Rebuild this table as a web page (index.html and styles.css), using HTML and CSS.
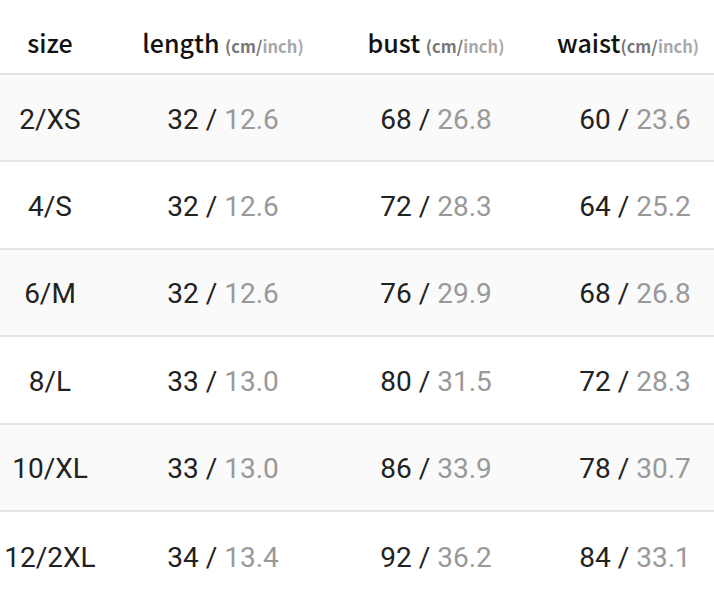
FILE: index.html
```html
<!DOCTYPE html>
<html>
<head>
<meta charset="utf-8">
<link rel="stylesheet" href="styles.css">
</head>
<body>
<div class="table">
  <div class="row head">
    <div class="cell">size</div>
    <div class="cell">length <span class="unit"><span class="cm">(cm/</span><span class="in">inch)</span></span></div>
    <div class="cell">bust <span class="unit"><span class="cm">(cm/</span><span class="in">inch)</span></span></div>
    <div class="cell c4h">waist<span class="unit"><span class="cm">(cm/</span><span class="in">inch)</span></span></div>
  </div>
  <div class="row alt">
    <div class="cell sz">2/XS</div>
    <div class="cell v">32 / <span class="g">12.6</span></div>
    <div class="cell v">68 / <span class="g">26.8</span></div>
    <div class="cell v c4">60 / <span class="g">23.6</span></div>
  </div>
  <div class="row">
    <div class="cell sz">4/S</div>
    <div class="cell v">32 / <span class="g">12.6</span></div>
    <div class="cell v">72 / <span class="g">28.3</span></div>
    <div class="cell v c4">64 / <span class="g">25.2</span></div>
  </div>
  <div class="row alt">
    <div class="cell sz">6/M</div>
    <div class="cell v">32 / <span class="g">12.6</span></div>
    <div class="cell v">76 / <span class="g">29.9</span></div>
    <div class="cell v c4">68 / <span class="g">26.8</span></div>
  </div>
  <div class="row">
    <div class="cell sz">8/L</div>
    <div class="cell v">33 / <span class="g">13.0</span></div>
    <div class="cell v">80 / <span class="g">31.5</span></div>
    <div class="cell v c4">72 / <span class="g">28.3</span></div>
  </div>
  <div class="row alt">
    <div class="cell sz">10/XL</div>
    <div class="cell v">33 / <span class="g">13.0</span></div>
    <div class="cell v">86 / <span class="g">33.9</span></div>
    <div class="cell v c4">78 / <span class="g">30.7</span></div>
  </div>
  <div class="row last">
    <div class="cell sz">12/2XL</div>
    <div class="cell v">34 / <span class="g">13.4</span></div>
    <div class="cell v">92 / <span class="g">36.2</span></div>
    <div class="cell v c4">84 / <span class="g">33.1</span></div>
  </div>
</div>
</body>
</html>
```
FILE: styles.css
```css
html, body {
  margin: 0;
  padding: 0;
  background: #fff;
}
body {
  width: 714px;
  height: 593px;
  overflow: hidden;
}
.table {
  display: flex;
  flex-direction: column;
}
.row {
  display: grid;
  grid-template-columns: 100px 246px 180px 188px;
  height: 87.4px;
  border-bottom: 2px solid #e4e4e4;
  box-sizing: border-box;
  align-items: center;
}
.row.head {
  height: 75px;
  background: #fff;
}
.row.alt {
  background: #fafafa;
}
.row.last {
  border-bottom: none;
}
.cell {
  text-align: center;
  white-space: nowrap;
}
.head .cell {
  font-family: "Noto Sans CJK JP", "Noto Sans", sans-serif;
  font-weight: 500;
  font-size: 25px;
  color: #111;
  padding-top: 10px;
}
.head .c4h {
  padding-left: 16px;
}
.head .unit {
  font-size: 16.5px;
  font-weight: 700;
}
.head .cm {
  color: #777;
}
.head .in {
  color: #a8a8a8;
}
.sz, .v {
  font-family: "Roboto", "Liberation Sans", sans-serif;
  font-size: 28px;
  color: #222;
  padding-top: 3px;
}
.v .g {
  color: #999;
}
.c4 {
  padding-left: 30px;
}
```
